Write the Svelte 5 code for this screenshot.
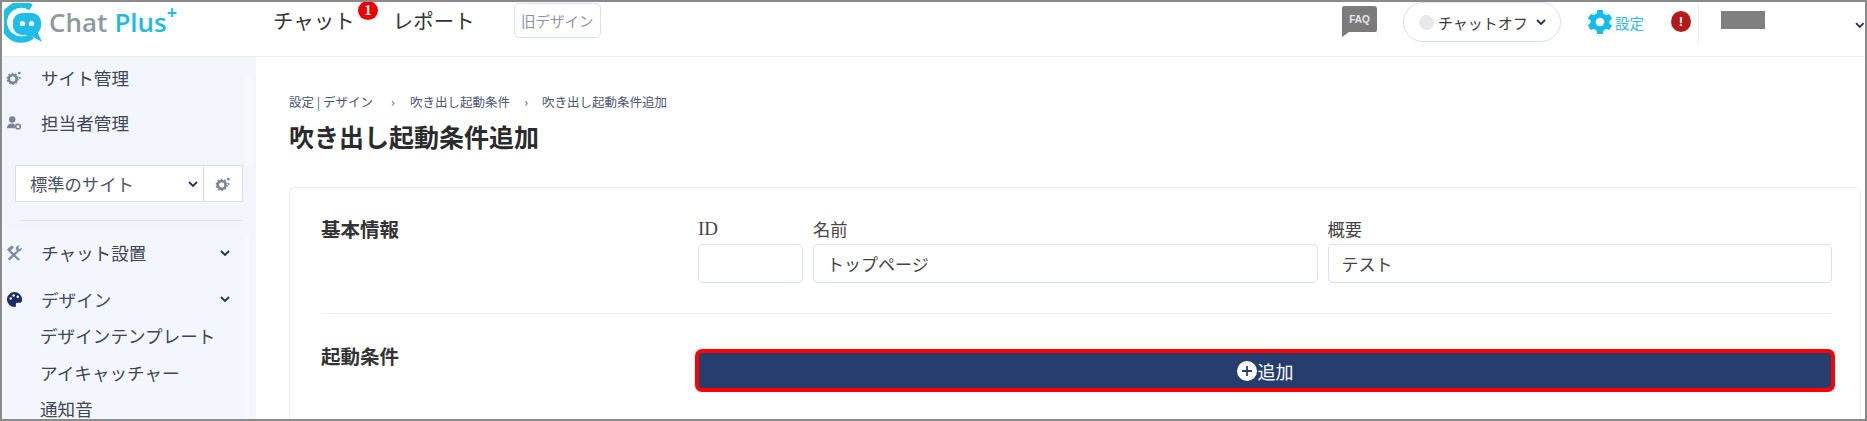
<script>
    const subItems = ['デザインテンプレート', 'アイキャッチャー', '通知音'];
</script>

{#snippet chevron(color = '#1f2f55')}
    <svg class="chev" viewBox="0 0 10 6" width="10" height="6">
        <polyline points="1,1 5,5 9,1" fill="none" stroke={color} stroke-width="1.8" />
    </svg>
{/snippet}

{#snippet smallGear()}
    <svg viewBox="0 0 18 18" width="16" height="16">
        <circle cx="7.5" cy="10" r="4.4" fill="none" stroke="#7b8496" stroke-width="3" />
        <circle cx="7.5" cy="10" r="6.2" fill="none" stroke="#7b8496" stroke-width="1.4" stroke-dasharray="2 1.9" />
        <circle cx="15" cy="3.5" r="1.6" fill="#7b8496" />
        <circle cx="15.5" cy="9" r="1.1" fill="#7b8496" />
    </svg>
{/snippet}

<div class="frame">
    <header class="top">
        <div class="logo">
            <svg viewBox="0 0 38 40" width="38" height="40">
                <path d="M28 33 A17.5 17.5 0 1 1 27 4.5" fill="none" stroke="#1fbde8" stroke-width="6.5" />
                <rect x="9" y="10" width="28" height="22" rx="9" fill="#1fbde8" />
                <path d="M22 30 L38 39 L33 28 Z" fill="#1fbde8" />
                <circle cx="18.5" cy="20.5" r="2.6" fill="#fff" />
                <circle cx="27.5" cy="20.5" r="2.6" fill="#fff" />
            </svg>
            <span class="chat">Chat</span>
            <span class="plus">Plus</span>
            <span class="sup">+</span>
        </div>
        <nav class="menu">
            <span class="nav-item">チャット<b class="badge">1</b></span>
            <span class="nav-item report">レポート</span>
            <span class="old">旧デザイン</span>
        </nav>
        <div class="tools">
            <svg class="faq" viewBox="0 0 37 32" width="37" height="32">
                <path d="M1 25 L1 32 L8 26 L36 26 L37 32 L37 25 Z" fill="#efeadf" />
                <path d="M3 0 H33 Q36 0 36 3 V24 Q36 26 33 26 H8 L1 31 V3 Q1 0 3 0 Z" fill="#7b7b7b" />
                <text x="18.5" y="17" text-anchor="middle" class="faq-text">FAQ</text>
            </svg>
            <div class="pill">
                <i class="dot"></i><span>チャットオフ</span>{@render chevron()}
            </div>
            <div class="setting">
                <svg viewBox="0 0 24 24" width="26" height="26">
                    <path fill="#12bdec" fill-rule="evenodd" d="M14.5 1 L15.2 4.2 L17.6 5.6 L20.7 4.6 L23.2 8.9 L20.8 11 V13.8 L23.2 15.1 L20.7 19.4 L17.6 18.4 L15.2 19.8 L14.5 23 H9.5 L8.8 19.8 L6.4 18.4 L3.3 19.4 L0.8 15.1 L3.2 13 V10.2 L0.8 8.9 L3.3 4.6 L6.4 5.6 L8.8 4.2 L9.5 1 Z M12 8 A4 4 0 1 0 12 16 A4 4 0 1 0 12 8 Z" />
                </svg>
                <span>設定</span>
            </div>
            <div class="alert">!</div>
            <div class="user">
                <div class="masked"></div>
                {@render chevron()}
            </div>
        </div>
    </header>

    <div class="body">
        <aside class="side">
            <div class="side-top">
                <div class="row">
                    <span class="ico">{@render smallGear()}</span>
                    <span>サイト管理</span>
                </div>
                <div class="row">
                    <span class="ico">
                        <svg viewBox="0 0 18 18" width="16" height="16">
                            <circle cx="7" cy="5" r="3.6" fill="#7b8496" />
                            <path d="M1 15 Q1 9.5 7 9.5 Q10 9.5 10 12 V15 Z" fill="#7b8496" />
                            <circle cx="13.5" cy="13" r="2.6" fill="none" stroke="#7b8496" stroke-width="1.8" />
                        </svg>
                    </span>
                    <span>担当者管理</span>
                </div>
            </div>
            <div class="site-select">
                <div class="site-name">標準のサイト{@render chevron()}</div>
                <div class="site-gear">{@render smallGear()}</div>
            </div>
            <div class="side-rule"></div>
            <div class="side-list">
                <div class="row tall first-tall">
                    <span class="ico">
                        <svg viewBox="0 0 18 18" width="16" height="16">
                            <path d="M5 6 L16 16.5 L13.5 17.5 L3 7.5 Z" fill="#7f8ba6" />
                            <path d="M1 5 L6 0.5 L9 2.5 L4 8 Z" fill="#7f8ba6" />
                            <path d="M12.5 6 L2 15.5 L4 17.5 L14 8 Z" fill="#7f8ba6" />
                            <path d="M11 4.5 A3.6 3.6 0 0 1 15.5 0.8 L13.5 3.2 L15 4.8 L17.4 2.8 A3.6 3.6 0 0 1 13.5 7.5 Z" fill="#7f8ba6" />
                        </svg>
                    </span>
                    <span>チャット設置</span>
                    {@render chevron()}
                </div>
                <div class="row tall active">
                    <span class="ico">
                        <svg viewBox="0 0 18 18" width="17" height="17">
                            <path d="M9 1 A8 8 0 1 0 9 17 Q11 17 10.5 15 Q10 12.5 12.5 12.5 H15 Q17 12.5 17 9 A8 8 0 0 0 9 1 Z" fill="#1c2f63" />
                            <circle cx="5" cy="8" r="1.3" fill="#fff" />
                            <circle cx="8" cy="4.8" r="1.3" fill="#fff" />
                            <circle cx="12.5" cy="6" r="1.3" fill="#fff" />
                        </svg>
                    </span>
                    <span>デザイン</span>
                    {@render chevron()}
                </div>
                <div class="subs">
                    {#each subItems as item}
                        <div class="sub">{item}</div>
                    {/each}
                </div>
            </div>
            <div class="track"></div>
            <div class="track lower"></div>
        </aside>

        <main class="main">
            <div class="crumbs">
                <span class="crumb-first">設定 | デザイン</span><em>›</em><span>吹き出し起動条件</span><em class="narrow">›</em><span>吹き出し起動条件追加</span>
            </div>
            <h1>吹き出し起動条件追加</h1>
            <section class="card">
                <div class="form-row first">
                    <h2>基本情報</h2>
                    <div class="fields">
                        <label class="f-id"><span class="id-text">ID</span><input type="text" readonly /></label>
                        <label class="f-wide">名前<input type="text" readonly value="トップページ" /></label>
                        <label class="f-wide">概要<input type="text" readonly value="テスト" /></label>
                    </div>
                </div>
                <div class="form-row second">
                    <h2>起動条件</h2>
                    <button class="add">
                        <svg viewBox="0 0 18 18" width="20" height="20">
                            <circle cx="9" cy="9" r="9" fill="#fff" />
                            <path d="M9 4.5 V13.5 M4.5 9 H13.5" stroke="#263d6e" stroke-width="1.6" />
                        </svg>
                        <span>追加</span>
                    </button>
                </div>
            </section>
        </main>
    </div>
</div>

<style>
    :global(body) {
        margin: 0;
        background: #fff;
    }

    .frame {
        box-sizing: border-box;
        width: 1867px;
        height: 421px;
        border: 2px solid #8a8a8a;
        overflow: hidden;
        font-family: "Noto Sans CJK JP", "Noto Sans", sans-serif;
        color: #3a3a3a;
        display: flex;
        flex-direction: column;
    }

    /* header */
    .top {
        height: 54px;
        flex: none;
        display: flex;
        align-items: flex-start;
        border-bottom: 1px solid #e9eef8;
        box-sizing: content-box;
    }

    .logo {
        width: 271px;
        height: 44px;
        padding-left: 2px;
        box-sizing: border-box;
        display: flex;
        align-items: flex-start;
        font-family: "Open Sans", sans-serif;
        font-weight: 600;
        font-size: 26px;
        line-height: 34px;
        flex: none;
    }

    .logo svg {
        margin: 1px 7px 0 0;
    }

    .chat {
        color: #8e999f;
        margin: 3px 7px 0 0;
    }

    .plus {
        color: #1fb9e6;
        margin-top: 3px;
    }

    .sup {
        color: #1fb9e6;
        font-size: 18px;
        line-height: 20px;
        font-weight: 700;
    }

    .menu {
        display: flex;
        align-items: center;
        height: 36px;
        font-size: 20.5px;
        color: #333;
    }

    .nav-item {
        position: relative;
        line-height: 36px;
    }

    .badge {
        position: absolute;
        left: 85px;
        top: -1px;
        width: 20px;
        height: 19px;
        border-radius: 50%;
        background: #ee0000;
        color: #fff;
        font: 700 14px/19px "Liberation Serif", serif;
        text-align: center;
    }

    .report {
        margin-left: 38px;
    }

    .old {
        margin-left: 39px;
        width: 87px;
        height: 35px;
        box-sizing: border-box;
        border: 1px solid #d9e1f2;
        border-radius: 5px;
        font-size: 14.5px;
        line-height: 33px;
        text-align: center;
        color: #8a93a6;
    }

    .tools {
        margin-left: auto;
        display: flex;
        align-items: flex-start;
    }

    .faq {
        margin: 4px 25px 0 0;
    }

    .faq-text {
        font: 700 10px "Liberation Sans", sans-serif;
        fill: #e8e8e8;
    }

    .pill {
        width: 158px;
        height: 40px;
        box-sizing: border-box;
        border: 1px solid #d8e0f3;
        border-radius: 20px;
        display: flex;
        align-items: center;
        padding-left: 15px;
        font-size: 15px;
        color: #3a3a3a;
    }

    .dot {
        width: 15px;
        height: 15px;
        border-radius: 50%;
        background: #e8e8e8;
        margin-right: 4px;
    }

    .pill .chev {
        margin-left: 8px;
    }

    .setting {
        display: flex;
        align-items: center;
        height: 36px;
        margin: 2px 27px 0 26px;
        color: #2bbde8;
        font-size: 14.5px;
        gap: 2px;
    }

    .alert {
        width: 20px;
        height: 21px;
        margin-top: 9px;
        border-radius: 50%;
        background: #b31b1b;
        color: #fff;
        font: 700 13px/21px "Liberation Sans", sans-serif;
        text-align: center;
    }

    .user {
        width: 167px;
        height: 40px;
        margin: 2px 0 0 7px;
        border-left: 1px solid #e9eef8;
        display: flex;
        align-items: flex-start;
        padding-left: 22px;
        box-sizing: border-box;
    }

    .masked {
        width: 46px;
        height: 18px;
        margin-top: 7px;
        background: #808080;
    }

    .user .chev {
        margin: 18px 0 0 90px;
    }

    /* sidebar */
    .body {
        flex: 1;
        display: flex;
        min-height: 0;
    }

    .side {
        width: 254px;
        flex: none;
        background: #f2f5fb;
        position: relative;
        font-size: 17.6px;
        color: #404553;
        margin-right: 3px;
        overflow: hidden;
    }

    .side-top {
        margin-top: -2px;
    }

    .row {
        height: 45px;
        display: flex;
        align-items: center;
        padding-left: 4px;
    }

    .ico {
        width: 35px;
        flex: none;
        display: flex;
    }

    .row .chev {
        position: absolute;
        left: 218px;
    }

    .site-select {
        margin: 20px 0 0 13px;
        width: 228px;
        height: 37px;
        display: flex;
        box-sizing: border-box;
        border: 1px solid #d8e0f0;
        background: #fff;
    }

    .site-name {
        flex: 1;
        display: flex;
        align-items: center;
        padding-left: 14px;
        font-size: 17.3px;
        color: #4a5366;
        border-right: 1px solid #d8e0f0;
    }

    .site-name .chev {
        margin-left: auto;
        margin-right: 5px;
    }

    .site-gear {
        width: 38px;
        display: flex;
        align-items: center;
        justify-content: center;
    }

    .side-rule {
        height: 1px;
        background: #d9e1f0;
        margin: 18px 14px 0 18px;
    }

    .side-list {
        margin-top: 8px;
        width: 243px;
        background: #f3f6fc;
    }

    .side-list .row.tall {
        height: 46px;
    }

    .side-list .row.first-tall {
        height: 47px;
    }

    .active {
        color: #3b4a74;
    }

    .subs {
        margin-top: -4px;
    }

    .sub {
        box-sizing: border-box;
        height: 36.5px;
        padding: 9px 0 0 38px;
        line-height: 18px;
        white-space: nowrap;
    }

    .track {
        position: absolute;
        left: 243px;
        top: 20px;
        width: 8px;
        height: 90px;
        background: #f7f9fd;
    }

    .track.lower {
        top: 179px;
        height: 190px;
        width: 4px;
    }

    /* main */
    .main {
        flex: 1;
        min-width: 0;
        padding: 35px 4px 0 30px;
    }

    .crumbs {
        font-size: 12.5px;
        line-height: 20px;
        color: #4a5570;
        display: flex;
        white-space: nowrap;
    }

    .crumb-first {
        width: 87px;
        flex: none;
    }

    .crumbs em {
        font-style: normal;
        width: 34px;
        text-align: center;
    }

    .crumbs em.narrow {
        width: 32px;
    }

    h1 {
        margin: 6px 0 0;
        font-size: 25px;
        line-height: 36px;
        font-weight: 700;
        color: #2b2b2b;
    }

    .card {
        margin-top: 33px;
        height: 260px;
        border: 1px solid #e8edf7;
        border-radius: 6px;
        padding: 0 28px 0 31px;
    }

    .form-row {
        display: flex;
    }

    .form-row.first {
        height: 126px;
        box-sizing: border-box;
        padding-top: 26px;
        border-bottom: 1px solid #eef2f9;
    }

    .form-row.second {
        padding-top: 27px;
    }

    h2 {
        margin: 0;
        width: 377px;
        flex: none;
        font-size: 19.5px;
        line-height: 30px;
        font-weight: 700;
        color: #333;
    }

    .fields {
        display: flex;
        flex: 1;
        gap: 10px;
        margin-top: 3px;
    }

    label {
        display: flex;
        flex-direction: column;
        gap: 3px;
        font-size: 17.3px;
        line-height: 24px;
        color: #444;
    }

    .id-text {
        font: 19px/24px "Liberation Serif", serif;
    }

    .f-id {
        width: 105px;
        flex: none;
    }

    .f-wide {
        flex: 1;
    }

    input {
        box-sizing: border-box;
        width: 100%;
        height: 39px;
        border: 1px solid #d8e0f3;
        border-radius: 5px;
        padding: 0 13px;
        font: 17px "Noto Sans CJK JP", sans-serif;
        color: #444;
        outline: none;
    }

    .add {
        flex: 1;
        height: 43px;
        margin: 8px -3px 0 -3px;
        box-sizing: border-box;
        border: 4px solid #f00;
        border-radius: 7px;
        background: #263d6e;
        color: #fff;
        font: 18px "Noto Sans CJK JP", sans-serif;
        display: flex;
        align-items: center;
        justify-content: center;
        gap: 1px;
        padding: 0;
    }
</style>
